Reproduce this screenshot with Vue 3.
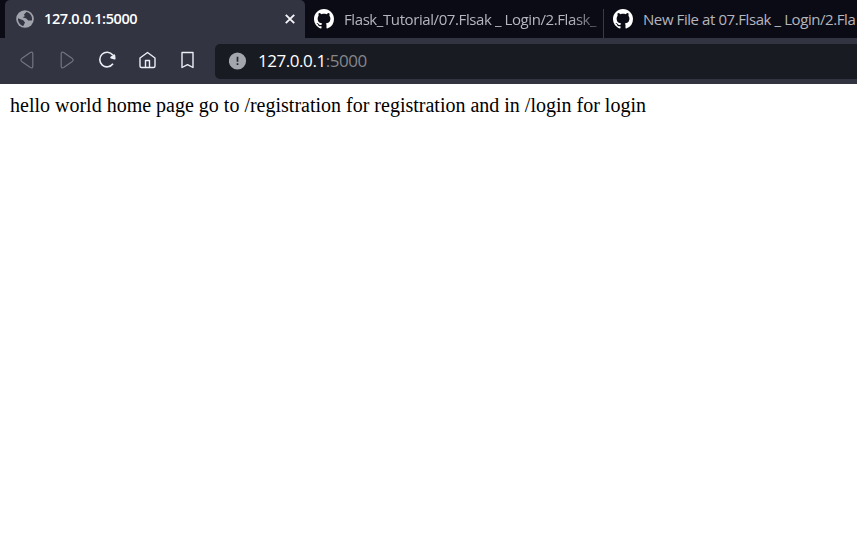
<script setup>
const tabs = [
  { title: 'Flask_Tutorial/07.Flsak _ Login/2.Flask_', cls: 'first' },
  { title: 'New File at 07.Flsak _ Login/2.Fla', cls: 'second' },
]
</script>

<template>
  <div class="browser">
    <div class="tabs">
      <div class="tab active">
        <svg class="globe" width="18" height="18" viewBox="0 0 18 18">
          <circle cx="9" cy="9" r="8.8" fill="#a2a4ad" />
          <path d="M2 8.2 7.2 10.2 9 12.5 7.3 16C4 15.2 1.8 12 2 8.2ZM10.4 2.1 8 4.4 8.8 6.3 6.6 7.3 10.3 8.4 12.2 10.5 15.9 10.4C16.8 6.5 14 2.7 10.4 2.1Z" fill="#323442" />
        </svg>
        <span class="title">127.0.0.1:5000</span>
        <svg class="close" width="10" height="10" viewBox="0 0 10 10">
          <path d="m.8.8 8.4 8.4M9.2.8.8 9.2" stroke="#f5f5f8" stroke-width="1.9" />
        </svg>
      </div>
      <div v-for="tab in tabs" :key="tab.title" class="tab" :class="tab.cls">
        <svg class="github" width="20" height="20" viewBox="0 0 16 16" fill="#fff">
          <path d="M8 0C3.58 0 0 3.58 0 8c0 3.54 2.29 6.53 5.47 7.59.4.07.55-.17.55-.38 0-.19-.01-.82-.01-1.49-2.01.37-2.53-.49-2.69-.94-.09-.23-.48-.94-.82-1.13-.28-.15-.68-.52-.01-.53.63-.01 1.08.58 1.23.82.72 1.21 1.87.87 2.33.66.07-.52.28-.87.51-1.07-1.78-.2-3.64-.89-3.64-3.95 0-.87.31-1.59.82-2.15-.08-.2-.36-1.02.08-2.12 0 0 .67-.21 2.2.82.64-.18 1.32-.27 2-.27s1.36.09 2 .27c1.53-1.04 2.2-.82 2.2-.82.44 1.1.16 1.92.08 2.12.51.56.82 1.27.82 2.15 0 3.07-1.87 3.75-3.65 3.95.29.25.54.73.54 1.48 0 1.07-.01 1.93-.01 2.2 0 .21.15.46.55.38A8.01 8.01 0 0 0 16 8c0-4.42-3.58-8-8-8Z" />
        </svg>
        <span class="title">{{ tab.title }}</span>
      </div>
    </div>
    <div class="toolbar">
      <svg class="nav dim" viewBox="0 0 20 20"><path d="M13.3 2.5Q15.8 1.3 15.8 4v12q0 2.7-2.5 1.5L4.7 11.4q-1.7-1.4 0-2.8Z" /></svg>
      <svg class="nav dim" viewBox="0 0 20 20"><path d="M6.7 2.5Q4.2 1.3 4.2 4v12q0 2.7 2.5 1.5l8.6-6.1q1.7-1.4 0-2.8Z" /></svg>
      <svg class="nav" viewBox="0 0 20 20"><path d="M15.8 5A7.3 7.3 0 1 0 16 13.8" stroke-width="1.6" /><path d="M14.2 7.6 17.2 5.4l.4 3.2Z" fill="#eceef4" stroke-width="2" /></svg>
      <svg class="nav" viewBox="0 0 20 20"><path d="M3 8 10.5 2.5 18 8V16q0 1.5-1.5 1.5h-12Q3 17.500 3 16ZM8.500 17.500v-7h4v7" /></svg>
      <svg class="nav" viewBox="0 0 20 20"><path d="M5 2.500h11v15L10.500 14.600 5 17.500Z" /></svg>
      <div class="address">
        <svg width="18" height="18" viewBox="0 0 18 18">
          <circle cx="8.500" cy="9" r="8.600" fill="#a4a6ad" />
          <path d="M8.500 4.700v5M8.500 11.300v1.700" stroke="#252832" stroke-width="1.700" />
        </svg>
        <span class="url">127.0.0.1<span class="port">:5000</span></span>
      </div>
    </div>
    <main>hello world home page go to /registration for registration and in /login for login</main>
  </div>
</template>

<style>
body {
  background: #fff;
  overflow: hidden;
}
</style>

<style scoped>
.browser {
  width: 100%;
  height: 548px;
  overflow: hidden;
  background: #fff;
}
svg {
  display: block;
  flex: none;
}
.tabs {
  display: flex;
  height: 38px;
  padding-left: 5px;
  background: #0b0b16;
  overflow: hidden;
}
.tab {
  display: flex;
  flex: none;
  align-items: center;
  box-sizing: border-box;
  color: #b5b5bd;
  font: 15px/20px "Open Sans", sans-serif;
  white-space: nowrap;
}
.title {
  padding-bottom: 1px;
}
.active {
  width: 300px;
  padding: 0 10px 0 11px;
  background: #323442;
  border-radius: 5px 5px 0 0;
  color: #fff;
}
.active .title {
  margin-left: 10px;
  font-weight: 600;
  font-size: 14.5px;
  letter-spacing: -0.4px;
}
.close {
  margin-left: auto;
}
.first {
  width: 299px;
  padding-left: 9px;
  background: linear-gradient(#3a3b45, #3a3b45) right 9px / 1px 29px no-repeat;
}
.first .title {
  width: 256px;
  margin-left: 10px;
  letter-spacing: -0.41px;
  mask-image: linear-gradient(to right, #000 228px, rgb(0 0 0 / 0.3) 256px);
}
.second {
  width: 299px;
  padding-left: 9px;
}
.second .title {
  margin-left: 10px;
  letter-spacing: -0.42px;
}
.toolbar {
  display: flex;
  align-items: center;
  box-sizing: border-box;
  height: 46px;
  padding-left: 17px;
  background: #323442;
}
.nav {
  width: 20px;
  height: 20px;
  margin: 0 20px 2px 0;
  fill: none;
  stroke: #eceef4;
  stroke-width: 1.4;
  stroke-linejoin: round;
}
.dim {
  stroke: #737581;
  stroke-width: 1.2;
}
.address {
  display: flex;
  flex: 1;
  align-items: center;
  box-sizing: border-box;
  height: 35px;
  margin-left: -2px;
  padding-left: 14px;
  border-radius: 5px 0 0 5px;
  background: #191b22;
}
.url {
  margin-left: 11px;
  color: #fff;
  font: 17px/24px "Open Sans", sans-serif;
  letter-spacing: -0.45px;
}
.port {
  color: #85868c;
}
main {
  padding: 10px 10px 0;
  color: #000;
  font: 20px/23px "Liberation Serif", serif;
  white-space: nowrap;
}
</style>
